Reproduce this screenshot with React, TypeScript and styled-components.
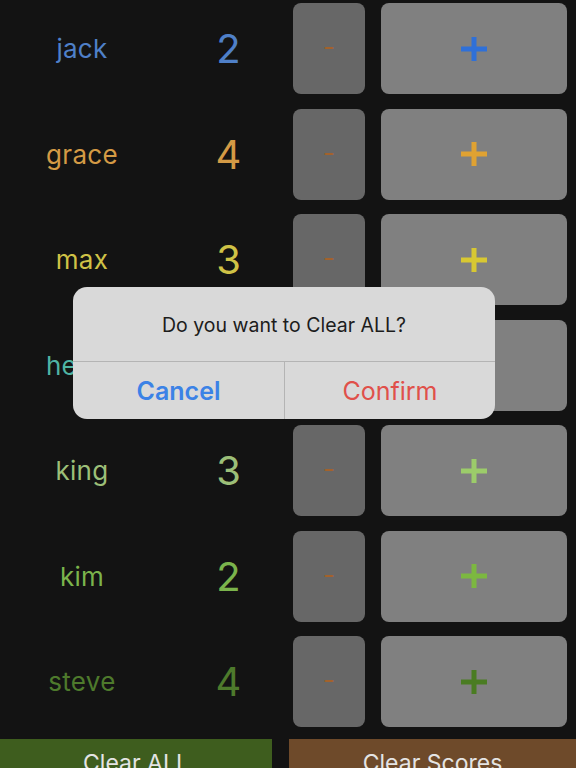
import React from "react";
import styled, { createGlobalStyle } from "styled-components";

/* ===============================
   Global
================================ */

const Global = createGlobalStyle`
  html, body {
    margin: 0;
    padding: 0;
    background: #131313;
    overflow: hidden;
  }

  body {
    font-family: Inter, "Liberation Sans", Arial, sans-serif;
  }
`;

/* ===============================
   Page
================================ */

const Page = styled.div`
  width: 576px;
  height: 768px;
  position: relative;
  overflow: hidden;
  background: #131313;
`;

const List = styled.div`
  display: flex;
  flex-direction: column;
  gap: 14.5px;
  padding-top: 3px;
`;

/* ===============================
   Player Row
================================ */

const Row = styled.div`
  display: grid;
  grid-template-columns: 164px 129px 72px 186px;
  column-gap: 0;
  height: 91px;
  align-items: center;
`;

const Name = styled.span<{ $color: string }>`
  text-align: center;
  font-size: 26px;
  letter-spacing: 0.3px;
  color: ${(p) => p.$color};
`;

const Score = styled.span<{ $color: string }>`
  text-align: center;
  font-size: 40px;
  color: ${(p) => p.$color};
`;

const MinusButton = styled.button`
  height: 100%;
  border: none;
  border-radius: 8px;
  background: #676767;
  color: #a3622c;
  font-family: inherit;
  font-size: 26px;
  padding: 0 0 4px;
`;

const PlusButton = styled.button`
  height: 100%;
  width: 186px;
  margin-left: 16px;
  border: none;
  border-radius: 8px;
  background: #808080;
  display: flex;
  align-items: center;
  justify-content: center;
  padding: 0;
`;

/* ===============================
   Bottom Bar
================================ */

const BottomBar = styled.div`
  display: grid;
  grid-template-columns: 272px 287px;
  column-gap: 17px;
  margin-top: 12px;
`;

const BarButton = styled.button<{ $bg: string }>`
  height: 44px;
  border: none;
  background: ${(p) => p.$bg};
  color: #e4e4e4;
  font-family: inherit;
  font-size: 23px;
  padding: 3px 0 0;
`;

/* ===============================
   Alert
================================ */

const Alert = styled.div`
  position: absolute;
  left: 73px;
  top: 287px;
  width: 422px;
  border-radius: 14px;
  background: #d9d9d9;
  overflow: hidden;
`;

const AlertTitle = styled.div`
  height: 75px;
  display: flex;
  align-items: center;
  justify-content: center;
  font-size: 19.5px;
  color: #1c1c1c;
  border-bottom: 1px solid #b4b4b4;
  padding-top: 2px;
  box-sizing: border-box;
`;

const AlertActions = styled.div`
  display: grid;
  grid-template-columns: 211px 1fr;
  height: 57px;
`;

const AlertButton = styled.button<{ $color: string; $bold?: boolean }>`
  border: none;
  background: transparent;
  color: ${(p) => p.$color};
  font-family: inherit;
  font-size: 25px;
  font-weight: ${(p) => (p.$bold ? 600 : 400)};

  & + & {
    border-left: 1px solid #b4b4b4;
  }
`;

/* ===============================
   Plus icon
================================ */

function PlusIcon({ color }: { color: string }) {
  return (
    <svg width="26" height="24" viewBox="0 0 26 24">
      <rect x="0" y="9.5" width="26" height="5" fill={color} />
      <rect x="10.5" y="0" width="5" height="24" fill={color} />
    </svg>
  );
}

/* ===============================
   Data
================================ */

const players = [
  { name: "jack", score: 2, color: "#4f80c8", plus: "#2f70d8" },
  { name: "grace", score: 4, color: "#d49a45", plus: "#e0a232" },
  { name: "max", score: 3, color: "#cfc246", plus: "#d8c832" },
  { name: "henry", score: 1, color: "#4fb4a4", plus: "#4fc0ae" },
  { name: "king", score: 3, color: "#9cbf78", plus: "#9ccc6a" },
  { name: "kim", score: 2, color: "#7bb44c", plus: "#7cb840" },
  { name: "steve", score: 4, color: "#4e7a2c", plus: "#4a7c22" },
];

/* ===============================
   Component
================================ */

export default function App() {
  return (
    <Page>
      <Global />

      <List>
        {players.map((p) => (
          <Row key={p.name}>
            <Name $color={p.color}>{p.name}</Name>
            <Score $color={p.color}>{p.score}</Score>
            <MinusButton>-</MinusButton>
            <PlusButton>
              <PlusIcon color={p.plus} />
            </PlusButton>
          </Row>
        ))}
      </List>

      <BottomBar>
        <BarButton $bg="#3e5d1e">Clear ALL</BarButton>
        <BarButton $bg="#6e4a2a">Clear Scores</BarButton>
      </BottomBar>

      {/* Confirm dialog */}
      <Alert>
        <AlertTitle>Do you want to Clear ALL?</AlertTitle>
        <AlertActions>
          <AlertButton $color="#3b82e6" $bold>
            Cancel
          </AlertButton>
          <AlertButton $color="#e0504a">Confirm</AlertButton>
        </AlertActions>
      </Alert>
    </Page>
  );
}
